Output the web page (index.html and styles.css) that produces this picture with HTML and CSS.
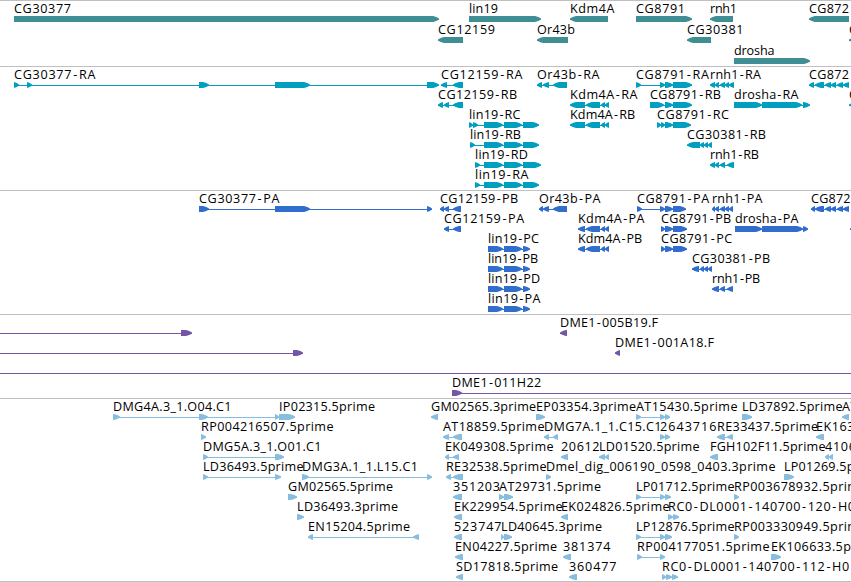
FILE: index.html
```html
<!DOCTYPE html>
<html>
<head>
 <meta charset="utf-8">
 <title>Genome tracks</title>
 <link rel="stylesheet" href="styles.css">
</head>
<body>
   <div id="browser">
      <div class="track genes"><svg id="genes"></svg></div>
      <div class="track transcripts"><svg id="transcripts"></svg></div>
      <div class="track proteins"><svg id="proteins"></svg></div>
      <div class="track bacs"><svg id="bacs"></svg></div>
      <div class="track ests"><svg id="ests"></svg></div>
   </div>
   <script src="tracks.js"></script>
</body>
</html>
```

FILE: styles.css
```css
body {
  margin: 0;
  background: #fff;
  font-family: "Open Sans", "DejaVu Sans", sans-serif;
  overflow: hidden;
}
#browser {
  display: flex;
  flex-direction: column;
  width: 851px;
  border-bottom: 1px solid #c0c0c0;
}
.track {
  box-sizing: border-box;
  border-top: 1px solid #c0c0c0;
  overflow: hidden;
}
.track svg {
  display: block;
  width: 100%;
  height: 100%;
}
.track text {
  font-size: 12.6px;
  fill: #000;
}
.track rect {
  shape-rendering: crispEdges;
}
.genes {
  height: 66px;
  color: #3e8e93;
}
.transcripts {
  height: 124px;
  color: #009ebf;
}
.proteins {
  height: 124px;
  color: #316dcd;
}
.bacs {
  height: 84px;
  color: #7357a6;
}
.ests {
  height: 183px;
  color: #87bddf;
}
.feature {
  fill: currentColor;
}
```

FILE: tracks.js
```js
// feature: [row, label, label end (0 = natural width), strand, blocks, line (optional)]
var lin19 = [[484, 503], [504, 522], [523, 539]];
var kdm4a = [[570, 585], [586, 600], [601, 605], [605, 609]];
var kdm4aCds = [[578, 585], [586, 600], [601, 605], [605, 609]];
var lin19Cds = [[488, 503], [504, 522], [523, 530]];

var tracks = {
   genes: { pitch: 21, features: [
      [0, "CG30377", 70.5, 1, [[14, 439]]],
      [0, "lin19", 497.5, 1, [[469, 541]]],
      [0, "Kdm4A", 614, -1, [[570, 608]]],
      [0, "CG8791", 684.5, 1, [[636, 692]]],
      [0, "rnh1", 736.5, -1, [[710, 733]]],
      [0, "CG872", 848.5, -1, [[809, 849]]],
      [1, "CG12159", 494.5, -1, [[438, 463]]],
      [1, "Or43b", 574.5, -1, [[537, 568]]],
      [1, "CG30381", 743, -1, [[687, 711]]],
      [1, "C", 0, -1, [[849, 870]]],
      [2, "drosha", 774, 1, [[734, 810]]]
   ] },
   transcripts: { pitch: 20, features: [
      [0, "CG30377-RA", 95, 1, [[14, 19], [27, 32], [199, 209], [275, 310], [427, 439]]],
      [0, "CG12159-RA", 522, -1, [[441, 447], [453, 463]]],
      [0, "Or43b-RA", 599, -1, [[537, 542], [543, 549], [553, 567]]],
      [0, "CG8791-RA", 708.5, 1, [[636, 641], [660, 665], [665, 673], [673, 692]]],
      [0, "rnh1-RA", 760.5, -1, [[710, 715], [715, 719], [720, 725], [725, 729], [729, 734]]],
      [0, "CG872", 848.5, -1, [[809, 814], [815, 824], [825, 831], [831, 836], [837, 843], [843, 849]]],
      [1, "CG12159-RB", 516.7, -1, [[438, 443], [444, 449], [453, 463]]],
      [1, "Kdm4A-RA", 637, -1, kdm4a],
      [1, "CG8791-RB", 720.5, 1, [[650, 664], [665, 673], [673, 692]]],
      [1, "drosha-RA", 798, 1, [[734, 762], [762, 802], [803, 810]]],
      [1, "C", 0, -1, [[849, 870]]],
      [2, "lin19-RC", 520, 1, [[469, 473], [473, 478]].concat(lin19)],
      [2, "Kdm4A-RB", 634.7, -1, kdm4a],
      [2, "CG8791-RC", 728.5, 1, [[657, 661], [661, 665], [665, 673], [673, 691]]],
      [3, "lin19-RB", 520.5, 1, [[470, 475]].concat(lin19)],
      [3, "CG30381-RB", 765.5, -1, [[687, 700], [700, 704], [704, 708], [708, 712]]],
      [4, "lin19-RD", 527.5, 1, [[475, 480], [484, 503], [504, 522], [523, 541]]],
      [4, "rnh1-RB", 758.5, -1, [[710, 715], [715, 719], [720, 725], [727, 734]]],
      [5, "lin19-RA", 528, 1, [[475, 480]].concat(lin19)]
   ] },
   proteins: { pitch: 20, features: [
      [0, "CG30377-PA", 279, 1, [[199, 209], [275, 310], [427, 432]]],
      [0, "CG12159-PB", 517.7, -1, [[440, 444], [444, 449], [453, 461]]],
      [0, "Or43b-PA", 600, -1, [[539, 543], [543, 549], [553, 567]]],
      [0, "CG8791-PA", 708.7, 1, [[637, 642], [660, 665], [665, 673], [673, 686]]],
      [0, "rnh1-PA", 762, -1, [[712, 715], [715, 719], [720, 725], [725, 729], [729, 733]]],
      [0, "CG872", 850, -1, [[811, 815], [815, 824], [825, 831], [831, 836], [837, 843], [843, 849]]],
      [1, "CG12159-PA", 523.7, -1, [[444, 449], [453, 461]]],
      [1, "Kdm4A-PA", 644, -1, kdm4aCds],
      [1, "CG8791-PB", 730.7, 1, [[661, 665], [665, 673], [673, 687]]],
      [1, "drosha-PA", 798, 1, [[735, 762], [762, 803], [803, 808]]],
      [1, "", 0, -1, [[850, 870]]],
      [2, "lin19-PC", 538.5, 1, lin19Cds],
      [2, "Kdm4A-PB", 641.7, -1, kdm4aCds],
      [2, "CG8791-PC", 731.7, 1, [[661, 665], [665, 673], [673, 687]]],
      [3, "lin19-PB", 537.7, 1, lin19Cds],
      [3, "CG30381-PB", 769.7, -1, [[692, 699], [700, 704], [704, 708], [708, 712]]],
      [4, "lin19-PD", 539.7, 1, lin19Cds],
      [4, "rnh1-PB", 759.7, -1, [[712, 719], [720, 725], [727, 733]]],
      [5, "lin19-PA", 540, 1, lin19Cds]
   ] },
   bacs: { pitch: 20, features: [
      [0, "", 0, 1, [[181, 192]], [0, 192]],
      [0, "DME1-005B19.F", 657.5, -1, [[560, 567]]],
      [1, "", 0, 1, [[293, 303]], [0, 303]],
      [1, "DME1-001A18.F", 713.5, -1, [[615, 620]]],
      [2, "", 0, 1, [], [0, 851]],
      [3, "DME1-011H22", 540.7, 1, [[452, 462]], [452, 851]]
   ] },
   ests: { pitch: 20, features: [
      [0, "DMG4A.3_1.O04.C1", 231, 1, [[113, 120], [199, 208], [275, 279]]],
      [0, "IP02315.5prime", 374.5, 1, [[279, 295]]],
      [0, "GM02565.3prime", 535.7, -1, [[431, 438]]],
      [0, "EP03354.3prime", 635.5, 1, [[536, 545]]],
      [0, "AT15430.5prime", 737, 1, [[636, 641], [660, 665], [665, 670]]],
      [0, "LD37892.5prime", 842, 1, [[742, 752]]],
      [0, "AT", 857, -1, [[842, 849]]],
      [1, "RP004216507.5prime", 333, 1, [[201, 206]]],
      [1, "AT18859.5prime", 544, -1, [[443, 449], [453, 462]]],
      [1, "DMG7A.1_1.C15.C1", 661, -1, [[544, 549], [553, 558]]],
      [1, "2643716", 716, 1, [[660, 665], [665, 670]]],
      [1, "RE33437.5prime", 817.7, -1, [[717, 725], [727, 733]]],
      [1, "EK163", 854, -1, [[816, 824]]],
      [2, "DMG5A.3_1.O01.C1", 321, 1, [[203, 208], [275, 284]]],
      [2, "EK049308.5prime", 553, -1, [[445, 449], [453, 459]]],
      [2, "20612", 599, -1, [[561, 568]]],
      [2, "LD01520.5prime", 699, -1, [[599, 605], [605, 609]]],
      [2, "FGH102F11.5prime", 825, -1, [[710, 718]]],
      [2, "4106", 855.5, -1, [[825, 829], [829, 833]]],
      [3, "LD36493.5prime", 303, 1, [[203, 208], [275, 281]]],
      [3, "DMG3A.1_1.L15.C1", 417.5, 1, [[302, 309], [427, 432]]],
      [3, "RE32538.5prime", 546, -1, [[446, 451], [453, 463]]],
      [3, "Dmel_dig_006190_0598_0403.3prime", 775, 1, [[546, 551]]],
      [3, "LP01269.5prime", 882, 1, [[784, 794]]],
      [4, "GM02565.5prime", 392.5, 1, [[288, 297]]],
      [4, "351203", 499.5, -1, [[453, 462]]],
      [4, "AT29731.5prime", 600.5, 1, [[499, 504], [504, 513]]],
      [4, "LP01712.5prime", 734, 1, [[636, 641], [660, 665], [665, 671]]],
      [4, "RP003678932.5prime", 866, 1, [[734, 739]]],
      [5, "LD36493.3prime", 397.5, 1, [[297, 304]]],
      [5, "EK229954.5prime", 562, -1, [[454, 462]]],
      [5, "EK024826.5prime", 669, -1, [[561, 568]]],
      [5, "RC0-DL0001-140700-120-H0", 854.5, 1, [[668, 673], [673, 679]]],
      [6, "EN15204.5prime", 409.7, -1, [[308, 313], [413, 419]]],
      [6, "523747", 501, -1, [[454, 462]]],
      [6, "LD40645.3prime", 601.5, 1, [[501, 504], [504, 512]]],
      [6, "LP12876.5prime", 734, 1, [[636, 641], [660, 665], [665, 672]]],
      [6, "RP003330949.5prime", 866, 1, [[734, 739]]],
      [7, "EN04227.5prime", 556.7, -1, [[455, 463]]],
      [7, "381374", 610, -1, [[563, 571]]],
      [7, "RP004177051.5prime", 769, 1, [[637, 642], [660, 665]]],
      [7, "EK106633.5prime", 879, 1, [[771, 781]]],
      [8, "SD17818.5prime", 557.7, -1, [[456, 463]]],
      [8, "360477", 616, -1, [[569, 577]]],
      [8, "RC0-DL0001-140700-112-H0", 848.7, 1, [[662, 666], [666, 672], [672, 678]]]
   ] }
};

function add(svg, name, attrs) {
   var el = document.createElementNS("http://www.w3.org/2000/svg", name);
   Object.keys(attrs).forEach(function (key) {
      el.setAttribute(key, attrs[key]);
   });
   svg.appendChild(el);
   return el;
}

// block with a blunt pointed end on the strand side
function arrow(a, b, y, strand) {
   var tip = Math.min(6, b - a);
   var from = strand > 0 ? a : b;
   var to = strand > 0 ? b : a;
   var neck = to - strand * tip;
   var mid = to - strand * tip * 0.45;
   return "M" + from + " " + y + "H" + neck + "L" + mid + " " + (y + 1) + "L" + to + " " + (y + 2.5) +
      "V" + (y + 3.5) + "L" + mid + " " + (y + 5) + "L" + neck + " " + (y + 6) + "H" + from + "Z";
}

Object.keys(tracks).forEach(function (id) {
   var svg = document.getElementById(id);
   tracks[id].features.forEach(function (f) {
      var top = f[0] * tracks[id].pitch;
      var blocks = f[4];
      var line = f[5] || [blocks[0][0], blocks[blocks.length - 1][1]];
      add(svg, "rect", { "class": "feature", x: line[0], y: top + 18, width: line[1] - line[0], height: 1 });
      blocks.forEach(function (b) {
         add(svg, "path", { "class": "feature", d: arrow(b[0], b[1], top + 15, f[3]) });
      });
      if (f[1]) {
         var text = add(svg, "text", { x: blocks[0][0], y: top + 12 });
         text.textContent = f[1];
         // extra room either side of a hyphen
         if (f[1].indexOf("-") != -1) {
            text.setAttribute("dx", f[1].split("").map(function (c, i) {
               return c == "-" || f[1][i - 1] == "-" ? 1 : 0;
            }).join(" "));
         }
         if (f[2]) {
            text.setAttribute("textLength", f[2] - blocks[0][0] + 0.5);
         }
      }
   });
});
```
